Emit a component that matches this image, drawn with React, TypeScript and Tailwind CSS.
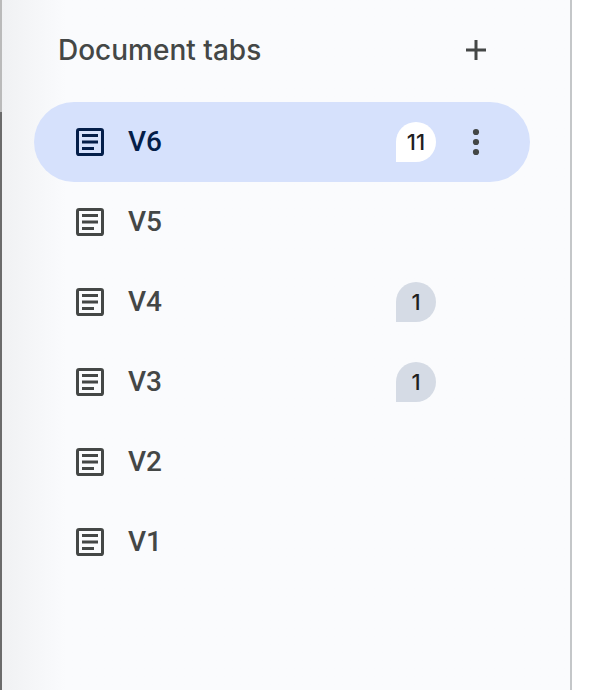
import React from "react";

type Tab = { name: string; comments?: number; selected?: boolean };

const tabs: Tab[] = [
  { name: "V6", comments: 11, selected: true },
  { name: "V5" },
  { name: "V4", comments: 1 },
  { name: "V3", comments: 1 },
  { name: "V2" },
  { name: "V1" },
];

function DocumentIcon() {
  return (
    <svg className="size-7 shrink-0" viewBox="0 0 28 28" fill="none" aria-hidden="true">
      <rect x="1.5" y="1.5" width="25" height="25" rx="1.6" stroke="currentColor" strokeWidth="3" />
      <path d="M6 7.5h16M6 14h16M6 20.5h12" stroke="currentColor" strokeWidth="3" />
    </svg>
  );
}

function TabRow({ name, comments, selected }: Tab) {
  return (
    <li
      className={
        selected
          ? "flex h-20 items-center rounded-full bg-[#d6e1fc] pr-[34px] pl-[42px] text-[#041e49]"
          : "flex h-20 items-center rounded-full pr-[34px] pl-[42px] text-[#444746]"
      }
    >
      <button
        type="button"
        aria-current={selected ? "page" : undefined}
        className="flex flex-1 items-center gap-6 text-left font-['Roboto','Liberation_Sans',sans-serif] text-[28px] leading-9 font-medium"
      >
        <DocumentIcon />
        <span>{name}</span>
      </button>
      {comments !== undefined && (
        <span
          className={
            selected
              ? "flex size-10 items-center justify-center rounded-full rounded-bl-[2px] bg-white text-[22px] leading-7 font-medium text-[#1f1f1f]"
              : "flex size-10 items-center justify-center rounded-full rounded-bl-[2px] bg-[#d5dbe5] text-[22px] leading-7 font-medium text-[#1f1f1f]"
          }
        >
          {comments}
        </span>
      )}
      <div className="ml-5 size-10 text-[#444746]">
        {selected && (
          <button type="button" aria-label="Tab options" className="block size-10">
            <svg className="size-10" viewBox="0 0 40 40" fill="currentColor" aria-hidden="true">
              <circle cx="20" cy="10" r="3.1" />
              <circle cx="20" cy="20" r="3.1" />
              <circle cx="20" cy="30" r="3.1" />
            </svg>
          </button>
        )}
      </div>
    </li>
  );
}

export default function App() {
  return (
    <div className="flex min-h-screen bg-white font-['Inter','Liberation_Sans',sans-serif]">
      <div className="flex w-0.5 shrink-0 flex-col" aria-hidden="true">
        <div className="h-28 bg-[#bababa]" />
        <div className="flex-1 bg-[#6b6b6b]" />
      </div>
      <nav
        aria-label="Document tabs"
        className="mr-[30px] flex-1 border-r-2 border-[#c4c7c9] bg-[#fafbfd] bg-linear-to-r from-[#f0f1f3] to-[#fafbfd] to-[64px] pr-10 pl-8"
      >
        <header className="flex h-[102px] items-center justify-between pr-8 pb-0.5 pl-6 text-[#444746]">
          <h1 className="text-[28px] leading-9 font-medium">Document tabs</h1>
          <button type="button" aria-label="Add tab" className="size-11">
            <svg className="size-11" viewBox="0 0 44 44" fill="none" aria-hidden="true">
              <path d="M22 12v20M12 22h20" stroke="currentColor" strokeWidth="3" />
            </svg>
          </button>
        </header>
        <ul>
          {tabs.map((tab) => (
            <TabRow key={tab.name} {...tab} />
          ))}
        </ul>
      </nav>
    </div>
  );
}
